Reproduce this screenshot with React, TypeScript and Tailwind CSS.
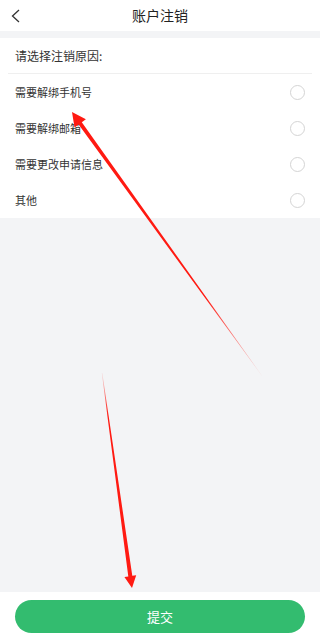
import React from "react";

const reasons = ["需要解绑手机号", "需要解绑邮箱", "需要更改申请信息", "其他"];

export default function App() {
  return (
    <div
      className="relative flex h-[637px] w-full flex-col overflow-hidden bg-[#f3f4f6] text-[#333]"
      style={{ fontFamily: '"Noto Sans CJK SC", "Liberation Sans", sans-serif' }}
    >
      {/* Header */}
      <div className="flex h-[31px] items-center bg-white">
        <div className="flex w-[40px] items-center pl-[11px]">
          <svg width="9" height="14" viewBox="0 0 9 14" fill="none">
            <path d="M8 1L1.5 7L8 13" stroke="#333" strokeWidth="1.3" />
          </svg>
        </div>
        <div className="flex-1 text-center text-[14px] text-[#222]">账户注销</div>
        <div className="w-[40px]" />
      </div>

      {/* Reasons */}
      <div className="mt-[7px] bg-white">
        <div className="mx-[8px] flex h-[36px] items-center border-b border-[#efefef] pl-[7px] text-[12px]">
          请选择注销原因:
        </div>
        {reasons.map((r) => (
          <div key={r} className="flex h-[36px] items-center justify-between pl-[15px] pr-[15px]">
            <span className="text-[11px]">{r}</span>
            <span className="h-[15px] w-[15px] rounded-full border border-[#d4d4d4]" />
          </div>
        ))}
      </div>

      <div className="flex-1" />

      {/* Submit */}
      <div className="h-[45px] bg-white px-[15px] pt-[8px]">
        <button className="flex h-[33px] w-full items-center justify-center rounded-full bg-[#33bc6f] text-[13px] text-white">
          提交
        </button>
      </div>

      {/* Annotation arrows */}
      <svg className="pointer-events-none absolute left-0 top-0" width="307" height="637">
        <defs>
          <linearGradient id="g1" gradientUnits="userSpaceOnUse" x1="262" y1="376" x2="72" y2="112">
            <stop offset="0" stopColor="#ff1a12" stopOpacity="0.1" />
            <stop offset="0.3" stopColor="#ff1a12" stopOpacity="1" />
            <stop offset="1" stopColor="#ff1a12" stopOpacity="1" />
          </linearGradient>
          <linearGradient id="g2" gradientUnits="userSpaceOnUse" x1="102" y1="373" x2="132" y2="588">
            <stop offset="0" stopColor="#ff1a12" stopOpacity="0.1" />
            <stop offset="0.2" stopColor="#ff1a12" stopOpacity="1" />
            <stop offset="1" stopColor="#ff1a12" stopOpacity="1" />
          </linearGradient>
        </defs>
        <polygon
          fill="url(#g1)"
          points="262.3,376.2 81.8,122.2 85.9,119.3 72,112 74.5,127.5 78.6,124.6 261.8,375.8"
        />
        <polygon
          fill="url(#g2)"
          points="102.3,373 132.3,575.8 136.2,575.3 132,588 124.4,576.9 128.3,576.4 101.8,373"
        />
      </svg>
    </div>
  );
}
